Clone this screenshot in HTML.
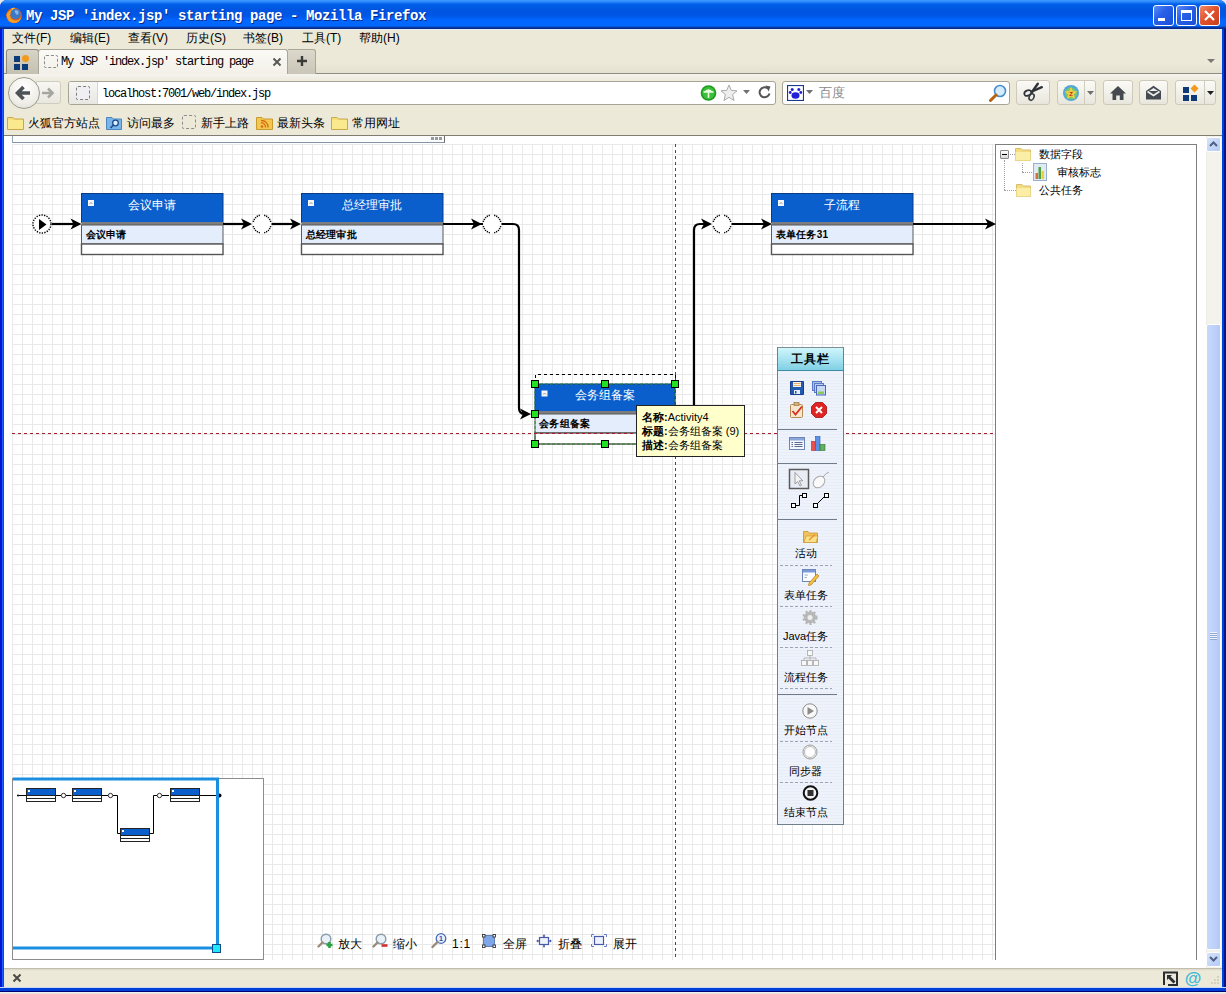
<!DOCTYPE html>
<html><head><meta charset="utf-8">
<style>
*{box-sizing:border-box}
html,body{margin:0;padding:0}
body{width:1226px;height:994px;position:relative;overflow:hidden;background:#e8e8e8;font-family:"Liberation Sans",sans-serif;font-size:12px;color:#000}
.a{position:absolute}
.mono{font-family:"Liberation Mono",monospace}
#frame{left:0;top:0;width:1226px;height:992px;background:linear-gradient(90deg,#0016d0 0,#0016d0 2px,#1d5cff 2px,#1d5cff 3px,#1848c8 3px,#1848c8 4px,#0042dc 4px,#0042dc 1224px,#00168a 1224px);border-radius:7px 7px 0 0}
#fbottom{left:0;top:987px;width:1226px;height:7px;background:linear-gradient(180deg,#c8d8f0 0,#c8d8f0 1px,#0040d8 1px,#0040d8 4px,#000070 4px,#000070 5px,#eef0f8 5px,#eef0f8 6px,#e6e3d4 6px)}
#title{left:0;top:0;width:1226px;height:29px;border-radius:7px 7px 0 0;background:linear-gradient(180deg,#3d9bff 0,#2a86fb 2px,#0060e8 4px,#0055e0 10px,#0057e6 16px,#0066ff 20px,#0068ff 26px,#0a44b8 27px,#0a2a8a 28px,#0a2a8a 29px)}
#titletext{left:26px;top:8px;color:#fff;font-family:"Liberation Mono",monospace;font-weight:bold;font-size:14px;letter-spacing:-0.4px;white-space:pre;text-shadow:1px 1px 0 #0a2a8a}
.wbtn{top:5px;width:21px;height:21px;border:1px solid #fff;border-radius:3px;background:linear-gradient(135deg,#5b8ef8 0,#2a5fe8 40%,#1a4fd8 100%)}
#client{left:4px;top:29px;width:1218px;height:958px;background:#ece9d8}
.menu{top:30px;height:16px;line-height:16px;font-size:12px;white-space:pre}
#content{left:4px;top:135px;width:1218px;height:833px;background:#fff;border-top:1px solid #7f7d72}
#status{left:4px;top:968px;width:1218px;height:19px;background:linear-gradient(180deg,#a8a596 0,#d9d6c6 1px,#ece9d8 3px,#ece9d8 100%)}
.tb{top:80px;height:25px;border:1px solid #cdcabd;border-radius:3px;background:linear-gradient(180deg,#fbfaf6,#e8e6dc)}
.bm{top:115px;font-size:12px;line-height:16px;white-space:pre}
.tr{font-size:11px;line-height:14px;white-space:pre}
.tt{font-size:11px;line-height:14px;white-space:pre}
.tbt{left:772px;width:67px;text-align:center;font-size:11px;line-height:14px;white-space:pre}
.zb{top:936px;font-size:12px;line-height:16px;white-space:pre}
</style></head>
<body>
<div class="a" id="frame"></div>
<div class="a" id="title"></div>
<div class="a" id="client"></div>
<div class="a" id="fbottom"></div>
<div class="a" style="left:4px;top:29px;width:1218px;height:1px;background:#e4ecf6"></div>
<div class="a" id="titletext">My JSP 'index.jsp' starting page - Mozilla Firefox</div>
<!-- window buttons -->
<div class="a wbtn" style="left:1153px"></div>
<div class="a wbtn" style="left:1176px"></div>
<div class="a wbtn" style="left:1199px;background:linear-gradient(135deg,#f08a6a 0,#e0502a 50%,#c8401c 100%)"></div>

<!-- menu -->
<div class="a menu" style="left:12px">文件(F)</div>
<div class="a menu" style="left:70px">编辑(E)</div>
<div class="a menu" style="left:128px">查看(V)</div>
<div class="a menu" style="left:186px">历史(S)</div>
<div class="a menu" style="left:243px">书签(B)</div>
<div class="a menu" style="left:302px">工具(T)</div>
<div class="a menu" style="left:359px">帮助(H)</div>


<!-- tab strip -->
<div class="a" style="left:4px;top:48px;width:1218px;height:26px;background:linear-gradient(180deg,#ece9d8 0,#ece9d8 60%,#e3dfd0 100%)"></div>
<div class="a" style="left:4px;top:73px;width:1218px;height:1px;background:#8f8d80"></div>
<div class="a" style="left:6px;top:49px;width:33px;height:25px;border:1px solid #8e8c80;border-bottom:none;border-radius:3px 3px 0 0;background:linear-gradient(180deg,#d6d4c6,#c4c1b2)"></div>
<svg class="a" style="left:13px;top:54px" width="18" height="16" viewBox="0 0 18 16"><rect x="1" y="2" width="6" height="6" fill="#0d3a78"/><rect x="1" y="10" width="6" height="6" fill="#0d3a78"/><rect x="9" y="10" width="6" height="6" fill="#0d3a78"/><circle cx="12.5" cy="4.5" r="3.5" fill="#f29a1a"/></svg>
<div class="a" style="left:38px;top:49px;width:250px;height:25px;border:1px solid #a9a798;border-bottom:none;border-radius:3px 3px 0 0;background:linear-gradient(180deg,#fbfaf6,#f2f0e8)"></div>
<div class="a" style="left:44px;top:55px;width:14px;height:13px;border:1px dashed #8c8c8c;border-radius:2px"></div>
<div class="a mono" style="left:61px;top:54px;font-size:12px;letter-spacing:-1.2px;white-space:pre;line-height:16px">My JSP 'index.jsp' starting page</div>
<svg class="a" style="left:272px;top:57px" width="10" height="10" viewBox="0 0 10 10"><path d="M1.5 1.5L8.5 8.5M8.5 1.5L1.5 8.5" stroke="#5a5a55" stroke-width="2"/></svg>
<div class="a" style="left:288px;top:49px;width:28px;height:25px;border:1px solid #a9a798;border-bottom:none;border-left:none;border-radius:0 3px 0 0;background:linear-gradient(180deg,#dcd9cc,#c9c6b8)"></div>
<svg class="a" style="left:296px;top:55px" width="12" height="12" viewBox="0 0 12 12"><path d="M6 1V11M1 6H11" stroke="#3a3a38" stroke-width="2.4"/></svg>
<svg class="a" style="left:1207px;top:59px" width="9" height="5" viewBox="0 0 9 5"><path d="M0 0H8L4 4Z" fill="#7a7a72"/></svg>

<!-- nav bar -->
<div class="a" style="left:4px;top:74px;width:1218px;height:61px;background:linear-gradient(180deg,#f4f3ee 0,#ece9d8 8px,#ece9d8 100%)"></div>
<div class="a" style="left:36px;top:81px;width:25px;height:23px;border:1px solid #cfcdc2;border-radius:0 3px 3px 0;background:linear-gradient(180deg,#f8f7f2,#e9e7de)"></div>
<svg class="a" style="left:41px;top:86px" width="14" height="14" viewBox="0 0 14 14"><path d="M1 7H11M7 2.5L11.5 7L7 11.5" stroke="#a6a6a2" stroke-width="2.6" fill="none"/></svg>
<div class="a" style="left:8px;top:77px;width:32px;height:32px;border:1px solid #9c9b92;border-radius:50%;background:radial-gradient(circle at 50% 30%,#ffffff,#f0efe9 60%,#dedcd2)"></div>
<svg class="a" style="left:15px;top:85px" width="18" height="16" viewBox="0 0 18 16"><path d="M2 8H15M8.5 2L2.5 8L8.5 14" stroke="#4e5356" stroke-width="3.6" fill="none" stroke-linejoin="miter"/></svg>

<div class="a" style="left:68px;top:81px;width:708px;height:24px;border:1px solid #a6a398;border-radius:3px;background:#fff"></div>
<div class="a" style="left:69px;top:82px;width:29px;height:22px;background:linear-gradient(180deg,#f6f6f3,#e8e7e2);border-right:1px solid #d8d6ce;border-radius:2px 0 0 2px"></div>
<div class="a" style="left:76px;top:86px;width:14px;height:14px;border:1px dashed #7e7e7e;border-radius:2px;background:#f0f0f4"></div>
<div class="a mono" style="left:102px;top:86px;font-size:12px;letter-spacing:-1.2px;white-space:pre;line-height:16px">localhost:7001/web/index.jsp</div>
<svg class="a" style="left:700px;top:85px" width="18" height="16" viewBox="0 0 18 16"><circle cx="8.5" cy="8" r="7.8" fill="#1c9c1c"/><circle cx="8.5" cy="8" r="6.2" fill="#3cbf3a"/><path d="M3.5 7H13.5M8.5 7V13" stroke="#e8ffe0" stroke-width="1.6"/><path d="M4 7Q8.5 1.5 13 7" fill="#e8ffe0"/></svg>
<svg class="a" style="left:720px;top:84px" width="18" height="18" viewBox="0 0 18 18"><path d="M9 1L11.3 6.4L17 6.8L12.6 10.5L14 16.5L9 13.3L4 16.5L5.4 10.5L1 6.8L6.7 6.4Z" fill="#eeeeee" stroke="#aaaaaa" stroke-width="1"/></svg>
<svg class="a" style="left:743px;top:90px" width="7" height="5" viewBox="0 0 7 5"><path d="M0 0H7L3.5 4Z" fill="#707070"/></svg>
<svg class="a" style="left:758px;top:85px" width="14" height="15" viewBox="0 0 14 15"><path d="M11.5 8.5A5 5 0 1 1 9.5 3.2" stroke="#555" stroke-width="2" fill="none"/><path d="M7.5 0.5L12.5 1.5L10.5 6.5Z" fill="#555"/></svg>

<div class="a" style="left:782px;top:81px;width:228px;height:24px;border:1px solid #a6a398;border-radius:3px;background:#fff"></div>
<svg class="a" style="left:787px;top:85px" width="17" height="16" viewBox="0 0 17 16"><rect x="0.5" y="0.5" width="16" height="15" fill="#fff" stroke="#1a3a8c" stroke-width="1.2"/><ellipse cx="8.5" cy="10.5" rx="4" ry="3.2" fill="#2020d8"/><circle cx="5.2" cy="4.5" r="1.5" fill="#2020d8"/><circle cx="11.8" cy="4.5" r="1.5" fill="#2020d8"/><circle cx="3.2" cy="7.5" r="1.4" fill="#2020d8"/><circle cx="13.8" cy="7.5" r="1.4" fill="#2020d8"/></svg>
<svg class="a" style="left:806px;top:90px" width="7" height="5" viewBox="0 0 7 5"><path d="M0 0H7L3.5 4Z" fill="#707070"/></svg>
<div class="a" style="left:819px;top:85px;font-size:13px;line-height:16px;color:#8a8a8a">百度</div>
<svg class="a" style="left:989px;top:84px" width="18" height="18" viewBox="0 0 18 18"><circle cx="11" cy="7" r="5.5" fill="#d6ecfb" stroke="#4a8ec8" stroke-width="1.6"/><path d="M7 11L1.5 16.5" stroke="#b4620e" stroke-width="3" stroke-linecap="round"/></svg>

<div class="a tb" style="left:1016px;width:34px"></div>
<svg class="a" style="left:1020px;top:81px" width="26" height="22" viewBox="0 0 26 22"><path d="M12 11L17.8 2.8" stroke="#2e3338" stroke-width="2.4" stroke-linecap="round"/><path d="M12 10.5L21.8 6.2" stroke="#2e3338" stroke-width="2.4" stroke-linecap="round"/><ellipse cx="7.8" cy="12" rx="3.6" ry="2.6" transform="rotate(-25 7.8 12)" fill="none" stroke="#2e3338" stroke-width="1.7"/><ellipse cx="11.6" cy="16" rx="2.3" ry="3.4" transform="rotate(25 11.6 16)" fill="none" stroke="#3a3f44" stroke-width="1.6"/></svg>
<div class="a tb" style="left:1057px;width:39px"></div>
<div class="a" style="left:1084px;top:81px;width:1px;height:23px;background:#cfccc0"></div>
<svg class="a" style="left:1062px;top:84px" width="18" height="18" viewBox="0 0 18 18"><circle cx="9" cy="9" r="8" fill="#4fa8d8"/><circle cx="9" cy="9.5" r="6" fill="#7fc46a"/><path d="M9 2.5L10.8 7.2L15.5 7.4L11.8 10.3L13 15L9 12.4L5 15L6.2 10.3L2.5 7.4L7.2 7.2Z" fill="#f0d040"/><text x="9" y="12" font-size="6" text-anchor="middle" fill="#c02020" font-weight="bold">Z</text></svg>
<svg class="a" style="left:1087px;top:91px" width="7" height="5" viewBox="0 0 7 5"><path d="M0 0H7L3.5 4Z" fill="#707070"/></svg>
<div class="a tb" style="left:1103px;width:30px"></div>
<svg class="a" style="left:1109px;top:85px" width="18" height="16" viewBox="0 0 18 16"><path d="M9 1L1 8.5H3.5V15H7.2V10.5H10.8V15H14.5V8.5H17Z" fill="#444a50"/></svg>
<div class="a tb" style="left:1139px;width:29px"></div>
<svg class="a" style="left:1145px;top:85px" width="17" height="15" viewBox="0 0 17 15"><path d="M1 6L8.5 0.8L16 6V14.5H1Z" fill="#444a50"/><path d="M2.5 6.5L8.5 10.5L14.5 6.5" stroke="#eeeeee" stroke-width="1.6" fill="none"/><path d="M4 6L8.5 3L13 6" fill="#eeeeee"/></svg>
<div class="a tb" style="left:1175px;width:41px"></div>
<div class="a" style="left:1204px;top:81px;width:1px;height:23px;background:#cfccc0"></div>
<svg class="a" style="left:1182px;top:84px" width="18" height="17" viewBox="0 0 18 17"><rect x="1" y="3" width="6" height="6" fill="#0d3a78"/><rect x="1" y="11" width="6" height="6" fill="#0d3a78"/><rect x="9" y="11" width="6" height="6" fill="#0d3a78"/><path d="M12.5 0.5L16.5 4.5L12.5 8.5L8.5 4.5Z" fill="#f29a1a"/></svg>
<svg class="a" style="left:1207px;top:91px" width="7" height="5" viewBox="0 0 7 5"><path d="M0 0H7L3.5 4Z" fill="#202020"/></svg>

<!-- bookmarks -->
<svg class="a" style="left:7px;top:115px" width="17" height="15" viewBox="0 0 17 15"><path d="M0.5 2.5H6L7.5 4H16.5V14.5H0.5Z" fill="#f6de7a" stroke="#c8a84a" stroke-width="1"/><rect x="1" y="5" width="15" height="9" fill="#fbe98e"/></svg>
<div class="a bm" style="left:28px">火狐官方站点</div>
<svg class="a" style="left:106px;top:115px" width="16" height="15" viewBox="0 0 16 15"><path d="M0.5 2.5H6L7.5 4H15.5V14.5H0.5Z" fill="#7ab4e8" stroke="#4a86c0" stroke-width="1"/><circle cx="9.5" cy="8" r="2.8" fill="#dff0ff" stroke="#1a4c8c" stroke-width="1.3"/><path d="M7.5 10L4.5 13" stroke="#1a4c8c" stroke-width="1.6"/></svg>
<div class="a bm" style="left:127px">访问最多</div>
<div class="a" style="left:182px;top:115px;width:14px;height:14px;border:1px dashed #8c8c8c;border-radius:2px"></div>
<div class="a bm" style="left:201px">新手上路</div>
<svg class="a" style="left:256px;top:115px" width="17" height="15" viewBox="0 0 17 15"><path d="M0.5 2.5H6L7.5 4H16.5V14.5H0.5Z" fill="#f4c850" stroke="#c89a30" stroke-width="1"/><circle cx="6" cy="11.5" r="1.3" fill="#d86a10"/><path d="M5 8A4 4 0 0 1 9.5 12.5M5 5.5A6.5 6.5 0 0 1 12 12.5" stroke="#d86a10" stroke-width="1.3" fill="none"/></svg>
<div class="a bm" style="left:277px">最新头条</div>
<svg class="a" style="left:331px;top:115px" width="17" height="15" viewBox="0 0 17 15"><path d="M0.5 2.5H6L7.5 4H16.5V14.5H0.5Z" fill="#f6de7a" stroke="#c8a84a" stroke-width="1"/><rect x="1" y="5" width="15" height="9" fill="#fbe98e"/></svg>
<div class="a bm" style="left:352px">常用网址</div>


<div class="a" id="content"></div>
<div class="a" style="left:12px;top:136px;width:433px;height:7px;border-left:1px solid #9aa4b0;border-right:1px solid #6c6c6c;border-bottom:1px solid #8595a8;background:#fbfcfe"></div>
<div class="a" style="left:431px;top:137px;width:3px;height:3px;background:#9a9a9a"></div>
<div class="a" style="left:435px;top:137px;width:3px;height:3px;background:#9a9a9a"></div>
<div class="a" style="left:439px;top:137px;width:3px;height:3px;background:#9a9a9a"></div>
<div class="a" id="grid" style="left:12px;top:144px;width:983px;height:816px;background-color:#fff;background-image:linear-gradient(90deg,#e8e9e8 1px,transparent 1px),linear-gradient(180deg,#e8e9e8 1px,transparent 1px);background-size:10px 10px;background-position:0 0"></div>
<!-- right tree panel -->
<div class="a" style="left:995px;top:144px;width:202px;height:816px;border:1px solid #7f7f7f;border-bottom:none;background:#fff"></div>
<div class="a" style="left:1000px;top:150px;width:9px;height:9px;border:1px solid #8a8a8a;border-radius:1px;background:linear-gradient(180deg,#fff,#d8d8d8)"></div>
<div class="a" style="left:1002px;top:154px;width:5px;height:1px;background:#000"></div>
<div class="a" style="left:1010px;top:154px;width:5px;border-top:1px dotted #a0a0a0"></div>
<div class="a" style="left:1004px;top:160px;height:30px;border-left:1px dotted #a0a0a0"></div>
<div class="a" style="left:1004px;top:190px;width:12px;border-top:1px dotted #a0a0a0"></div>
<div class="a" style="left:1022px;top:163px;height:9px;border-left:1px dotted #a0a0a0"></div>
<div class="a" style="left:1022px;top:172px;width:10px;border-top:1px dotted #a0a0a0"></div>
<svg class="a" style="left:1015px;top:147px" width="16" height="14" viewBox="0 0 16 14"><path d="M0.5 1.5H6L7.5 3H15.5V13.5H0.5Z" fill="#f3dc82" stroke="#d8bf66" stroke-width="1"/><path d="M0.5 5H15.5V13.5H0.5Z" fill="#fbeea6"/></svg>
<svg class="a" style="left:1033px;top:163px" width="14" height="18" viewBox="0 0 14 18"><rect x="0.5" y="0.5" width="13" height="17" fill="#dfeaf4" stroke="#9ab0c8"/><rect x="2.5" y="10" width="2.5" height="6" fill="#e06a40"/><rect x="5.5" y="4" width="2.5" height="12" fill="#50a040"/><rect x="8.5" y="8" width="2.5" height="8" fill="#e8d040"/></svg>
<svg class="a" style="left:1016px;top:183px" width="15" height="14" viewBox="0 0 15 14"><path d="M0.5 1.5H6L7.5 3H14.5V13.5H0.5Z" fill="#f3dc82" stroke="#d8bf66" stroke-width="1"/><path d="M0.5 5H14.5V13.5H0.5Z" fill="#fbeea6"/></svg>
<div class="a tr" style="left:1039px;top:147px">数据字段</div>
<div class="a tr" style="left:1057px;top:165px">审核标志</div>
<div class="a tr" style="left:1039px;top:183px">公共任务</div>
<!-- scrollbar -->
<div class="a" style="left:1206px;top:136px;width:16px;height:832px;background:#f3f2ec;border-left:1px solid #eeede5"></div>
<div class="a" style="left:1206px;top:137px;width:15px;height:15px;border:1px solid #fff;border-radius:2px;background:linear-gradient(135deg,#d6e2fc,#b4cbf5)"></div>
<svg class="a" style="left:1209px;top:141px" width="9" height="6" viewBox="0 0 9 6"><path d="M1 5L4.5 1.5L8 5" stroke="#4d6185" stroke-width="2" fill="none"/></svg>
<div class="a" style="left:1206px;top:324px;width:15px;height:626px;border:1px solid #fff;border-radius:2px;background:linear-gradient(90deg,#c9d8fb,#bcd0fa 60%,#b3c8f5)"></div>
<div class="a" style="left:1210px;top:632px;width:7px;height:8px;background:repeating-linear-gradient(180deg,#eef3fe 0,#eef3fe 1px,#8fa8d8 1px,#8fa8d8 2px)"></div>
<div class="a" style="left:1206px;top:952px;width:15px;height:15px;border:1px solid #fff;border-radius:2px;background:linear-gradient(135deg,#d6e2fc,#b4cbf5)"></div>
<svg class="a" style="left:1209px;top:956px" width="9" height="6" viewBox="0 0 9 6"><path d="M1 1L4.5 4.5L8 1" stroke="#4d6185" stroke-width="2" fill="none"/></svg>
<svg class="a" style="left:0;top:0" width="1226" height="994" viewBox="0 0 1226 994">
<circle cx="42" cy="224" r="9" fill="#fff" stroke="#000" stroke-width="1.4" stroke-dasharray="1.3 1.3"/>
<path d="M39 219L46.5 224.5L39 230Z" fill="#000"/>
<path d="M52 224H76" stroke="#000" stroke-width="2.2" fill="none"/><path d="M81.5 224L70.5 218.5L73.5 224L70.5 229.5Z" fill="#000"/>
<path d="M223 224H247" stroke="#000" stroke-width="2.2" fill="none"/><path d="M252 224L241 218.5L244 224L241 229.5Z" fill="#000"/>
<path d="M271.5 224H296" stroke="#000" stroke-width="2.2" fill="none"/><path d="M301 224L290 218.5L293 224L290 229.5Z" fill="#000"/>
<path d="M443 224H487" stroke="#000" stroke-width="2.2" fill="none"/><path d="M482 224L471 218.5L474 224L471 229.5Z" fill="#000"/>
<path d="M501.5 224H513Q519 224 519 230V408Q519 414 525 414H528" stroke="#000" stroke-width="2.2" fill="none"/><path d="M531 414L520 408.5L523 414L520 419.5Z" fill="#000"/>
<path d="M675 414H688Q694 414 694 408V230Q694 224 700 224H706" stroke="#000" stroke-width="2.2" fill="none"/><path d="M712 224L701 218.5L704 224L701 229.5Z" fill="#000"/>
<path d="M731.5 224H767" stroke="#000" stroke-width="2.2" fill="none"/><path d="M772 224L761 218.5L764 224L761 229.5Z" fill="#000"/>
<path d="M913 224H994" stroke="#000" stroke-width="2.2" fill="none"/><path d="M996 224L985 218.5L988 224L985 229.5Z" fill="#000"/>
<circle cx="262" cy="224" r="9" fill="#fff"/><path d="M270.73 226.18A9 9 0 0 1 264.18 232.73M259.82 232.73A9 9 0 0 1 253.27 226.18M253.27 221.82A9 9 0 0 1 259.82 215.27M264.18 215.27A9 9 0 0 1 270.73 221.82" fill="none" stroke="#000" stroke-width="1.5" stroke-dasharray="1.2 0.9"/>
<circle cx="492" cy="224" r="9" fill="#fff"/><path d="M500.73 226.18A9 9 0 0 1 494.18 232.73M489.82 232.73A9 9 0 0 1 483.27 226.18M483.27 221.82A9 9 0 0 1 489.82 215.27M494.18 215.27A9 9 0 0 1 500.73 221.82" fill="none" stroke="#000" stroke-width="1.5" stroke-dasharray="1.2 0.9"/>
<circle cx="722" cy="224" r="9" fill="#fff"/><path d="M730.73 226.18A9 9 0 0 1 724.18 232.73M719.82 232.73A9 9 0 0 1 713.27 226.18M713.27 221.82A9 9 0 0 1 719.82 215.27M724.18 215.27A9 9 0 0 1 730.73 221.82" fill="none" stroke="#000" stroke-width="1.5" stroke-dasharray="1.2 0.9"/>
<rect x="81.5" y="193.5" width="141.5" height="29" fill="#0b5fcd" stroke="#0a3c86" stroke-width="1"/>
<rect x="81.5" y="222.0" width="141.5" height="3" fill="#7d7d7d"/>
<rect x="81.5" y="225.0" width="141.5" height="19" fill="#e3edfb" stroke="#5a5a5a" stroke-width="1"/>
<rect x="81.5" y="244.0" width="141.5" height="10.5" fill="#fff" stroke="#555" stroke-width="1.4"/>
<rect x="88.0" y="200.0" width="6" height="6" fill="#f4f6fb"/><path d="M89.5 204.0L91.0 202.5L92.5 204.0" stroke="#808080" stroke-width="0.8" fill="none"/>
<text x="152.25" y="208.5" fill="#fff" font-size="12" text-anchor="middle">会议申请</text>
<text x="85.5" y="238.0" fill="#000" font-size="10" font-weight="bold" letter-spacing="0.3">会议申请</text>
<rect x="301.5" y="193.5" width="141.5" height="29" fill="#0b5fcd" stroke="#0a3c86" stroke-width="1"/>
<rect x="301.5" y="222.0" width="141.5" height="3" fill="#7d7d7d"/>
<rect x="301.5" y="225.0" width="141.5" height="19" fill="#e3edfb" stroke="#5a5a5a" stroke-width="1"/>
<rect x="301.5" y="244.0" width="141.5" height="10.5" fill="#fff" stroke="#555" stroke-width="1.4"/>
<rect x="308.0" y="200.0" width="6" height="6" fill="#f4f6fb"/><path d="M309.5 204.0L311.0 202.5L312.5 204.0" stroke="#808080" stroke-width="0.8" fill="none"/>
<text x="372.25" y="208.5" fill="#fff" font-size="12" text-anchor="middle">总经理审批</text>
<text x="305.5" y="238.0" fill="#000" font-size="10" font-weight="bold" letter-spacing="0.3">总经理审批</text>
<rect x="771.5" y="193.5" width="141.5" height="29" fill="#0b5fcd" stroke="#0a3c86" stroke-width="1"/>
<rect x="771.5" y="222.0" width="141.5" height="3" fill="#7d7d7d"/>
<rect x="771.5" y="225.0" width="141.5" height="19" fill="#e3edfb" stroke="#5a5a5a" stroke-width="1"/>
<rect x="771.5" y="244.0" width="141.5" height="10.5" fill="#fff" stroke="#555" stroke-width="1.4"/>
<rect x="778.0" y="200.0" width="6" height="6" fill="#f4f6fb"/><path d="M779.5 204.0L781.0 202.5L782.5 204.0" stroke="#808080" stroke-width="0.8" fill="none"/>
<text x="842.25" y="208.5" fill="#fff" font-size="12" text-anchor="middle">子流程</text>
<text x="775.5" y="238.0" fill="#000" font-size="10" font-weight="bold" letter-spacing="0.3">表单任务31</text>
<rect x="535" y="384" width="140" height="27.5" fill="#0b5fcd" stroke="#0a3c86" stroke-width="1"/>
<rect x="535" y="411.0" width="140" height="3" fill="#7d7d7d"/>
<rect x="535" y="414.0" width="140" height="19" fill="#e3edfb" stroke="#5a5a5a" stroke-width="1"/>
<rect x="535" y="433.0" width="140" height="11.0" fill="#fff" stroke="#555" stroke-width="1.4"/>
<rect x="541.5" y="390.5" width="6" height="6" fill="#f4f6fb"/><path d="M543 394.5L544.5 393L546 394.5" stroke="#808080" stroke-width="0.8" fill="none"/>
<text x="605.0" y="399" fill="#fff" font-size="12" text-anchor="middle">会务组备案</text>
<text x="539" y="427.0" fill="#000" font-size="10" font-weight="bold" letter-spacing="0.3">会务组备案</text>
</svg>

<svg class="a" style="left:0;top:0" width="1226" height="994" viewBox="0 0 1226 994">
<path d="M535.5 384V374.5H675.5V384" stroke="#000" stroke-width="1" stroke-dasharray="3 3" fill="none"/>
<rect x="535" y="384" width="140" height="60" fill="none" stroke="#2a8a2a" stroke-width="1" stroke-dasharray="3 2"/>
<path d="M675.5 144V960" stroke="#a81c30" stroke-width="1" stroke-dasharray="3 3"/>
<path d="M12 433.5H995" stroke="#a81c30" stroke-width="1" stroke-dasharray="3 3"/>
<g fill="#22e022" stroke="#000" stroke-width="1">
<rect x="531.5" y="380.5" width="7" height="7"/><rect x="601.5" y="380.5" width="7" height="7"/><rect x="671.5" y="380.5" width="7" height="7"/>
<rect x="531.5" y="410.5" width="7" height="7"/>
<rect x="531.5" y="440.5" width="7" height="7"/><rect x="601.5" y="440.5" width="7" height="7"/><rect x="671.5" y="410.5" width="7" height="7"/><rect x="671.5" y="440.5" width="7" height="7"/>
</g>
</svg>

<!-- toolbar panel -->
<div class="a" style="left:777px;top:347px;width:67px;height:478px;border:1px solid #6f7f8c;border-top-color:#7f8f96;background:repeating-linear-gradient(180deg,#eef2fb 0,#eef2fb 2px,#e9edf8 2px,#e9edf8 3px)"></div>
<div class="a" style="left:778px;top:348px;width:65px;height:23px;border-bottom:1px solid #3f8ea6;background:linear-gradient(180deg,#cff6fb 0,#a9e4f2 50%,#80cfe3 100%)"></div>
<div class="a" style="left:778px;top:352px;width:65px;text-align:center;font-size:12px;font-weight:bold;line-height:14px;letter-spacing:1px">工具栏</div>
<svg class="a" style="left:777px;top:347px" width="67" height="478" viewBox="777 347 67 478">
<!-- save -->
<path d="M790.5 381.5H803.5V394.5H790.5Z" fill="#1f5bb5" stroke="#1a3f8a" stroke-width="1"/>
<rect x="793" y="382" width="8" height="5" fill="#f4f4f4"/><path d="M793.5 383.5H800.5M793.5 385.5H800.5" stroke="#e8a040" stroke-width="0.8"/>
<rect x="794" y="390" width="6" height="4" fill="#e8eef8"/><rect x="795" y="391" width="1.5" height="2.5" fill="#1f5bb5"/>
<!-- save all -->
<rect x="812.5" y="381.5" width="9" height="9" fill="#a8c0ea" stroke="#5a7ac8"/><rect x="814.5" y="383.5" width="9" height="9" fill="#b8cdf0" stroke="#5a7ac8"/><rect x="816.5" y="385.5" width="9" height="9.5" fill="#c8d8f4" stroke="#4a68b8"/><rect x="818" y="391.5" width="6" height="2.5" fill="#8ac860"/>
<!-- clipboard -->
<rect x="790.5" y="404.5" width="12" height="13" rx="1" fill="#f6e6d0" stroke="#b88a50"/><rect x="794" y="402.5" width="5" height="3" fill="#d8b070" stroke="#8a6a40" stroke-width="0.6"/>
<path d="M792.5 411L795.5 414.5L802 406.5" stroke="#d83020" stroke-width="1.8" fill="none"/>
<!-- red x -->
<path d="M815.5 402.5H822.5L826.5 406.5V413.5L822.5 417.5H815.5L811.5 413.5V406.5Z" fill="#e02424" stroke="#a01010" stroke-width="0.8"/>
<path d="M816 407L822 413M822 407L816 413" stroke="#fff" stroke-width="2"/>
<!-- sep -->
<path d="M778 429.5H837" stroke="#6f7a8a" stroke-width="1"/>
<!-- list -->
<rect x="789.5" y="437.5" width="15" height="12" fill="#f4f8fc" stroke="#6a86b8"/><rect x="790" y="438" width="14" height="2.5" fill="#8aa6d8"/>
<path d="M791.5 442.5H793M794.5 442.5H802.5M791.5 444.5H793M794.5 444.5H802.5M791.5 446.5H793M794.5 446.5H802.5" stroke="#5a6a90" stroke-width="1"/>
<!-- bar chart -->
<rect x="811.5" y="441.5" width="4" height="9" fill="#e85050" stroke="#a03030" stroke-width="0.6"/><rect x="815.5" y="436.5" width="4.5" height="14" fill="#5a90e8" stroke="#2a5ab0" stroke-width="0.6"/><rect x="820" y="444.5" width="5" height="6" fill="#60b060" stroke="#307030" stroke-width="0.6"/>
<path d="M778 463.5H837" stroke="#6f7a8a" stroke-width="1"/>
<!-- pointer selected -->
<rect x="789.5" y="469.5" width="19" height="19" fill="#e8ecf4" stroke="#5a5a5a" stroke-width="1.5"/>
<path d="M795 472.5V484L797.5 481.5L800 486L801.5 485.2L799.2 480.8H802.8Z" fill="#f4f4f4" stroke="#8a8a8a" stroke-width="0.8"/>
<!-- mouse -->
<ellipse cx="819" cy="482" rx="5" ry="6.5" transform="rotate(45 819 482)" fill="#fafafa" stroke="#a8a8a8" stroke-width="1"/><path d="M823 477Q826 473 829 472" stroke="#a8a8a8" fill="none"/>
<!-- polyline -->
<path d="M796 505.5H799.5V495.5H802" stroke="#000" stroke-width="1" fill="none"/><rect x="791.5" y="503.5" width="4" height="4" fill="#fff" stroke="#000" stroke-width="1"/><rect x="802.5" y="493.5" width="4" height="4" fill="#fff" stroke="#000" stroke-width="1"/>
<path d="M817 504L825 496" stroke="#000" stroke-width="1"/><rect x="813.5" y="503.5" width="4" height="4" fill="#fff" stroke="#000" stroke-width="1"/><rect x="824.5" y="493.5" width="4" height="4" fill="#fff" stroke="#000" stroke-width="1"/>
<path d="M778 519.5H837" stroke="#6f7a8a" stroke-width="1"/>
<!-- activity folder -->
<path d="M803.5 531.5H808L809.5 533H817.5V542.5H803.5Z" fill="#f2c25a" stroke="#c8902a" stroke-width="0.8"/><path d="M806 536H818L816 542.5H804Z" fill="#fbe08a" stroke="#c8902a" stroke-width="0.6"/><path d="M809 540L815 534.5" stroke="#e8902a" stroke-width="1.2"/>
<path d="M780 565.5H832" stroke="#9aa4b4" stroke-width="1" stroke-dasharray="3 2"/>
<!-- form task -->
<rect x="802.5" y="569.5" width="13" height="12" fill="#fafcff" stroke="#6a86b8"/><rect x="803" y="570" width="12" height="2.5" fill="#7a9ad8"/><path d="M804.5 575H808M804.5 577.5H807" stroke="#8a9ab8" stroke-width="0.8"/>
<path d="M809 583L817 574L819 576L811 585L808.5 585.5Z" fill="#f2c040" stroke="#b88020" stroke-width="0.7"/>
<path d="M780 606.5H832" stroke="#9aa4b4" stroke-width="1" stroke-dasharray="3 2"/>
<!-- gear -->
<g transform="translate(810 617.5)"><circle r="5.5" fill="#b8b8b8" stroke="#9a9a9a" stroke-width="1" stroke-dasharray="2 1.4"/><circle r="6.5" fill="none" stroke="#b8b8b8" stroke-width="2.2" stroke-dasharray="2.2 2"/><circle r="2.5" fill="#eeeeee"/></g>
<path d="M780 647.5H832" stroke="#9aa4b4" stroke-width="1" stroke-dasharray="3 2"/>
<!-- hierarchy -->
<rect x="807.5" y="650.5" width="5" height="5" fill="#f8f8f8" stroke="#a8a8a8" stroke-width="0.8"/><path d="M810 655.5V658M804 658H816M804 658V660M810 658V660M816 658V660" stroke="#a8a8a8" stroke-width="0.8"/>
<rect x="801.5" y="660.5" width="5" height="5" fill="#f8f8f8" stroke="#a8a8a8" stroke-width="0.8"/><rect x="807.5" y="660.5" width="5" height="5" fill="#f8f8f8" stroke="#a8a8a8" stroke-width="0.8"/><rect x="813.5" y="660.5" width="5" height="5" fill="#f8f8f8" stroke="#a8a8a8" stroke-width="0.8"/>
<path d="M780 688.5H832" stroke="#9aa4b4" stroke-width="1" stroke-dasharray="3 2"/>
<path d="M778 694.5H837" stroke="#6f7a8a" stroke-width="1"/>
<!-- start -->
<circle cx="810" cy="711" r="7.2" fill="#f8f8f8" stroke="#8a8a8a" stroke-width="1"/><path d="M807.5 707V715L814 711Z" fill="#8a8a8a"/>
<path d="M780 741.5H832" stroke="#9aa4b4" stroke-width="1" stroke-dasharray="3 2"/>
<!-- sync -->
<circle cx="810" cy="752" r="7" fill="#fff" stroke="#9a9a9a" stroke-width="1"/><circle cx="810" cy="752" r="5.5" fill="#fff" stroke="#b8b8b8" stroke-width="1"/>
<path d="M780 782.5H832" stroke="#9aa4b4" stroke-width="1" stroke-dasharray="3 2"/>
<!-- end -->
<circle cx="810.5" cy="793" r="6.8" fill="#f4f4f4" stroke="#111" stroke-width="2"/><rect x="807.5" y="790" width="6" height="6" fill="#303030"/>
</svg>
<div class="a tbt" style="top:546px">活动</div>
<div class="a tbt" style="top:588px">表单任务</div>
<div class="a tbt" style="top:629px">Java任务</div>
<div class="a tbt" style="top:670px">流程任务</div>
<div class="a tbt" style="top:723px">开始节点</div>
<div class="a tbt" style="top:764px">同步器</div>
<div class="a tbt" style="top:805px">结束节点</div>


<!-- minimap -->
<div class="a" style="left:12px;top:778px;width:252px;height:182px;border:1px solid #8c8c8c;background:#fff"></div>
<svg class="a" style="left:0;top:0" width="1226" height="994" viewBox="0 0 1226 994">
<g stroke="#000" stroke-width="1" fill="none">
<path d="M19 795.5H26M55.5 795.5H61M66 795.5H71.5M100.5 795.5H108M113 795.5H117.5V833.5H120M150 833.5H153.5V795.5H157M162 795.5H169M199 795.5H219"/>
</g>
<circle cx="18" cy="795.5" r="1" fill="#000"/>
<circle cx="63.5" cy="795.5" r="2.2" fill="#fff" stroke="#000" stroke-width="0.8"/>
<circle cx="110.5" cy="795.5" r="2.2" fill="#fff" stroke="#000" stroke-width="0.8"/>
<circle cx="159.5" cy="795.5" r="2.2" fill="#fff" stroke="#000" stroke-width="0.8"/>
<circle cx="219.5" cy="795.5" r="2" fill="#000"/>
<g stroke="#222" stroke-width="1">
<rect x="26.5" y="788.5" width="29" height="7" fill="#0b5fcd"/><rect x="26.5" y="795.5" width="29" height="3" fill="#fff"/><rect x="26.5" y="798.5" width="29" height="3" fill="#fff"/>
<rect x="72.5" y="788.5" width="29" height="7" fill="#0b5fcd"/><rect x="72.5" y="795.5" width="29" height="3" fill="#fff"/><rect x="72.5" y="798.5" width="29" height="3" fill="#fff"/>
<rect x="170.5" y="788.5" width="29" height="7" fill="#0b5fcd"/><rect x="170.5" y="795.5" width="29" height="3" fill="#fff"/><rect x="170.5" y="798.5" width="29" height="3" fill="#fff"/>
<rect x="120.5" y="828.5" width="29" height="7" fill="#0b5fcd"/><rect x="120.5" y="835.5" width="29" height="3" fill="#fff"/><rect x="120.5" y="838.5" width="29" height="3" fill="#fff"/>
</g>
<g fill="#fff"><rect x="28" y="790" width="2" height="2"/><rect x="74" y="790" width="2" height="2"/><rect x="172" y="790" width="2" height="2"/><rect x="122" y="830" width="2" height="2"/></g>
<path d="M13 779H217.5V948H13" stroke="#1a8fe0" stroke-width="3" fill="none"/>
<rect x="212.5" y="944.5" width="8" height="8" fill="#20e8f8" stroke="#104a8a" stroke-width="1"/>
</svg>
<!-- zoom bar -->
<svg class="a" style="left:317px;top:933px" width="17" height="16" viewBox="0 0 17 16"><circle cx="9" cy="6" r="4.8" fill="#e8f0f8" stroke="#8a9aa8" stroke-width="1.4"/><path d="M5.5 9.5L1.5 13.5" stroke="#9a8a7a" stroke-width="2.4" stroke-linecap="round"/><path d="M12.5 9V15M9.5 12H15.5" stroke="#2aa040" stroke-width="2.6"/></svg>
<div class="a zb" style="left:338px">放大</div>
<svg class="a" style="left:372px;top:933px" width="17" height="16" viewBox="0 0 17 16"><circle cx="9" cy="6" r="4.8" fill="#e8f0f8" stroke="#8a9aa8" stroke-width="1.4"/><path d="M5.5 9.5L1.5 13.5" stroke="#9a8a7a" stroke-width="2.4" stroke-linecap="round"/><path d="M9.5 12.5H15.5" stroke="#d03030" stroke-width="2.6"/></svg>
<div class="a zb" style="left:393px">缩小</div>
<svg class="a" style="left:431px;top:933px" width="16" height="16" viewBox="0 0 16 16"><circle cx="10" cy="5.5" r="4.8" fill="#e8f0ff" stroke="#4a6ab8" stroke-width="1.3"/><path d="M6.5 9L1.5 14" stroke="#9a8a7a" stroke-width="2.4" stroke-linecap="round"/><text x="10" y="8" font-size="7" text-anchor="middle" fill="#2a4aa8" font-weight="bold">1</text></svg>
<div class="a zb" style="left:452px;letter-spacing:0.8px">1:1</div>
<svg class="a" style="left:482px;top:934px" width="14" height="14" viewBox="0 0 14 14"><rect x="1.5" y="1.5" width="11" height="11" fill="#7ea6e8" stroke="#4a6aa8" stroke-width="0.8"/><g fill="#fff" stroke="#333" stroke-width="0.9"><rect x="0.5" y="0.5" width="2.5" height="2.5"/><rect x="11" y="0.5" width="2.5" height="2.5"/><rect x="0.5" y="11" width="2.5" height="2.5"/><rect x="11" y="11" width="2.5" height="2.5"/></g></svg>
<div class="a zb" style="left:503px">全屏</div>
<svg class="a" style="left:536px;top:934px" width="16" height="14" viewBox="0 0 16 14"><rect x="3.5" y="3.5" width="9" height="7" fill="#eef2fc" stroke="#4a5aa8" stroke-width="1.2"/><path d="M8 0.5V3M8 11V13.5M0.5 7H3M13 7H15.5" stroke="#4a5aa8" stroke-width="1.2"/><path d="M6.5 1.5H9.5L8 3Z M6.5 12.5H9.5L8 11Z M1 5.5V8.5L3 7Z M15 5.5V8.5L13 7Z" fill="#4a5aa8"/></svg>
<div class="a zb" style="left:558px">折叠</div>
<svg class="a" style="left:591px;top:934px" width="16" height="13" viewBox="0 0 16 13"><rect x="3.5" y="2.5" width="9" height="8" fill="#eef2fc" stroke="#4a5aa8" stroke-width="1.2"/><path d="M0.5 3V0.5H3M13 0.5H15.5V3M0.5 10V12.5H3M13 12.5H15.5V10" stroke="#6a7ac8" stroke-width="1" fill="none"/></svg>
<div class="a zb" style="left:613px">展开</div>

<!-- tooltip -->
<div class="a" style="left:636px;top:405px;width:109px;height:52px;border:1px solid #222;background:#ffffcc"></div>
<div class="a tt" style="left:642px;top:410px"><b>名称:</b>Activity4</div>
<div class="a tt" style="left:642px;top:424px"><b>标题:</b>会务组备案 (9)</div>
<div class="a tt" style="left:642px;top:438px"><b>描述:</b>会务组备案</div>

<div class="a" id="status"></div>
<svg class="a" style="left:12px;top:973px" width="10" height="10" viewBox="0 0 10 10"><path d="M1.5 1.5L8.5 8.5M8.5 1.5L1.5 8.5" stroke="#4a4a46" stroke-width="2"/></svg>
<svg class="a" style="left:1163px;top:971px" width="15" height="15" viewBox="0 0 15 15"><path d="M1 14V1.5H14V14H5" stroke="#2a2e32" stroke-width="2" fill="none"/><path d="M4 4H9L7.5 5.5L12.5 10.5L10.5 12.5L5.5 7.5L4 9Z" fill="#2a2e32"/></svg>
<svg class="a" style="left:1184px;top:970px" width="18" height="17" viewBox="0 0 18 17"><text x="9" y="14" font-size="17" font-weight="bold" text-anchor="middle" fill="#40b8d8" font-family="Liberation Sans">@</text></svg>
<svg class="a" style="left:1209px;top:976px" width="11" height="11" viewBox="0 0 11 11"><g fill="#d6d2bf"><rect x="8" y="0" width="2" height="2"/><rect x="5" y="3" width="2" height="2"/><rect x="8" y="3" width="2" height="2"/><rect x="2" y="6" width="2" height="2"/><rect x="5" y="6" width="2" height="2"/><rect x="8" y="6" width="2" height="2"/></g></svg>
<!-- firefox icon -->
<svg class="a" style="left:5px;top:6px" width="18" height="18" viewBox="0 0 18 18"><circle cx="9" cy="9.5" r="7.8" fill="#d8601a"/><circle cx="10.5" cy="8" r="5.2" fill="#3a78c8"/><path d="M9.5 4.5Q12 3.5 13.5 5.5Q14 8 12 9Q10 8 9.5 4.5Z" fill="#8ab8e8"/><path d="M1.5 9Q2 16 9 17Q15.5 16.5 16.8 10Q15 14.5 10.5 14.5Q5.5 14 5 9.5Q4.8 6 7.5 3.5Q3 4.5 1.5 9Z" fill="#f6a028"/><path d="M6 3Q8 1.2 10.5 2Q8.5 2.5 7.5 4Z" fill="#f8c848"/></svg>
<!-- window glyphs -->
<div class="a" style="left:1158px;top:18px;width:7px;height:3px;background:#fff"></div>
<div class="a" style="left:1181px;top:10px;width:11px;height:11px;border:1px solid #fff;border-top-width:3px"></div>
<svg class="a" style="left:1203px;top:9px" width="13" height="13" viewBox="0 0 13 13"><path d="M2 2L11 11M11 2L2 11" stroke="#fff" stroke-width="2.2"/></svg>

</body></html>
